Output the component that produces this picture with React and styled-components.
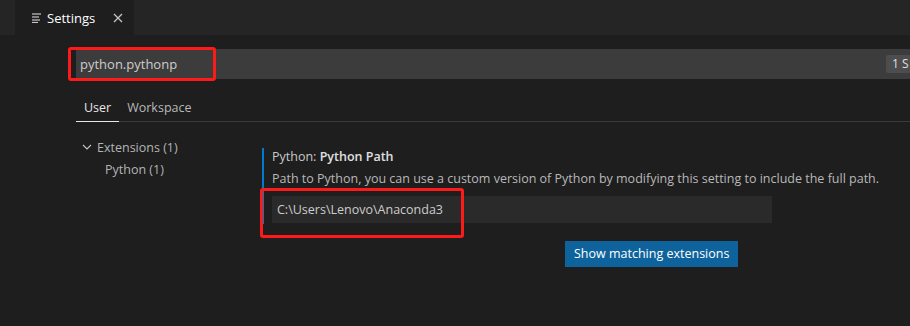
import styled, { createGlobalStyle } from 'styled-components';

const GlobalStyle = createGlobalStyle`
    html, body {
        margin: 0;
        padding: 0;
        background: #1e1e1e;
        overflow: hidden;
    }
`;

const font = `"Open Sans", "Noto Sans", "Liberation Sans", sans-serif`;

function App() {
    return (
        <>
            <GlobalStyle />
            <SPage>
                <STabBar>
                    <STab>
                        <svg width="10" height="10" viewBox="0 0 10 10">
                            <g stroke="#c5c5c5" strokeWidth="1.2">
                                <line x1="0" y1="1" x2="9" y2="1" />
                                <line x1="0" y1="4" x2="7" y2="4" />
                                <line x1="0" y1="7" x2="8" y2="7" />
                                <line x1="0" y1="9.5" x2="6" y2="9.5" />
                            </g>
                        </svg>
                        <span>Settings</span>
                        <SClose>
                            <svg width="10" height="10" viewBox="0 0 10 10">
                                <path d="M1 1 L9 9 M9 1 L1 9" stroke="#c5c5c5" strokeWidth="1.3" />
                            </svg>
                        </SClose>
                    </STab>
                </STabBar>
                <SBody>
                    <SSearch>
                        <SSearchText>python.pythonp</SSearchText>
                        <SBadge>1 S</SBadge>
                        <SMark style={{ left: -8, top: -2, width: 142, height: 28 }} />
                    </SSearch>
                    <STabs>
                        <STabLabel $active>User</STabLabel>
                        <STabLabel>Workspace</STabLabel>
                    </STabs>
                    <SMain>
                        <STree>
                            <STreeRow>
                                <svg width="10" height="10" viewBox="0 0 10 10">
                                    <path d="M1 3 L5 7 L9 3" stroke="#c5c5c5" strokeWidth="1.1" fill="none" />
                                </svg>
                                <span>Extensions (1)</span>
                            </STreeRow>
                            <STreeRow $child>Python (1)</STreeRow>
                        </STree>
                        <SSetting>
                            <STitle>Python: <b>Python Path</b></STitle>
                            <SDesc>Path to Python, you can use a custom version of Python by modifying this setting to include the full path.</SDesc>
                            <SInput>
                                C:\Users\Lenovo\Anaconda3
                                <SMark style={{ left: -12, top: -8, width: 198, height: 44 }} />
                            </SInput>
                        </SSetting>
                    </SMain>
                    <SButtonRow>
                        <SButton>Show matching extensions</SButton>
                    </SButtonRow>
                </SBody>
            </SPage>
        </>
    );
}

const SPage = styled.div`
    width: 910px;
    height: 326px;
    background: #1e1e1e;
    font-family: ${font};
    font-size: 12.5px;
    color: #cccccc;
    overflow: hidden;
`;

const STabBar = styled.div`
    display: flex;
    height: 35px;
    padding-left: 15px;
    background: #252526;
`;

const STab = styled.div`
    display: flex;
    align-items: center;
    width: 119px;
    box-sizing: border-box;
    padding-left: 17px;
    background: #1e1e1e;
    color: #ffffff;
    font-size: 13px;

    span {
        margin-left: 5px;
    }
`;

const SClose = styled.div`
    display: flex;
    margin-left: auto;
    margin-right: 11px;
`;

const SBody = styled.div`
    padding-left: 76px;
`;

const SSearch = styled.div`
    position: relative;
    display: flex;
    align-items: center;
    margin-top: 14px;
    height: 30px;
    background: #3c3c3c;
    width: 900px;
`;

const SSearchText = styled.div`
    padding-left: 4px;
    font-size: 13px;
    color: #cccccc;
`;

const SBadge = styled.div`
    position: absolute;
    left: 810px;
    top: 6px;
    height: 18px;
    line-height: 18px;
    padding: 0 6px;
    background: #4d4d4d;
    border-radius: 2px;
    font-size: 12px;
    color: #e0e0e0;
    white-space: nowrap;
`;

const SMark = styled.div`
    position: absolute;
    border: 3px solid #ff1a1a;
    border-radius: 3px;
    pointer-events: none;
`;

const STabs = styled.div`
    display: flex;
    align-items: flex-end;
    margin-top: 16px;
    height: 26px;
    border-bottom: 1px solid #3a3a3a;
    width: 900px;
`;

const STabLabel = styled.div`
    padding: 0 8px 5px;
    margin-bottom: -1px;
    color: ${(p) => (p.$active ? '#e7e7e7' : '#b8b8b8')};
    border-bottom: 1px solid ${(p) => (p.$active ? '#e7e7e7' : 'transparent')};
`;

const SMain = styled.div`
    display: flex;
    margin-top: 14px;
`;

const STree = styled.div`
    width: 186px;
    box-sizing: border-box;
    padding-left: 6px;
`;

const STreeRow = styled.div`
    display: flex;
    align-items: center;
    gap: 5px;
    height: 22px;
    color: #b4b4b4;
    padding-left: ${(p) => (p.$child ? '23px' : '0')};
`;

const SSetting = styled.div`
    margin-top: 12px;
    padding-left: 8px;
    padding-bottom: 1px;
    border-left: 2px solid #007acc;
`;

const STitle = styled.div`
    line-height: 17px;
    color: #c8c8c8;

    b {
        color: #e0e0e0;
        font-weight: 600;
    }
`;

const SDesc = styled.div`
    margin-top: 5px;
    line-height: 17px;
    color: #b8b8b8;
`;

const SInput = styled.div`
    position: relative;
    margin-top: 9px;
    width: 500px;
    height: 27px;
    line-height: 27px;
    box-sizing: border-box;
    padding-left: 5px;
    background: #2a2a2a;
    color: #cccccc;
`;

const SButtonRow = styled.div`
    display: flex;
    padding-left: 489px;
    margin-top: 17px;
`;

const SButton = styled.div`
    height: 26px;
    line-height: 26px;
    padding: 0 9px;
    background: #0e639c;
    color: #ffffff;
`;

export default App;
